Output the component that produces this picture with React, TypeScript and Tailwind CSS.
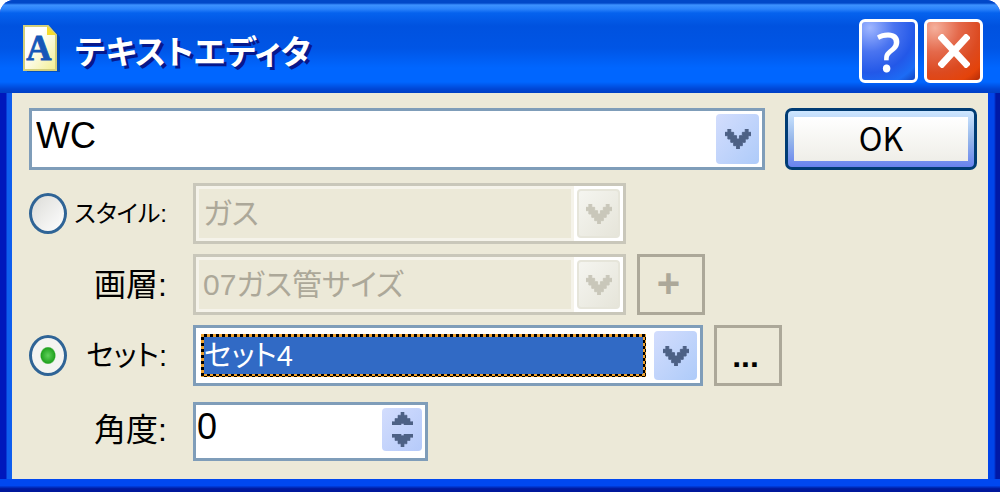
import { useState } from 'react'
import type { ReactNode } from 'react'

interface ComboProps {
  id: string
  label?: string
  options: string[]
  disabled?: boolean
  focused?: boolean
  className: string
}

function Chevron() {
  return (
    <svg viewBox="0 0 9 6" className="h-5 w-[26px]" preserveAspectRatio="none" aria-hidden="true">
      <path
        fill="currentColor"
        stroke="currentColor"
        strokeWidth="0.3"
        d="M1 0h1v1h1v1h1v1h1v-1h1v-1h1v-1h1v1h1v1h-1v1h-1v1h-1v1h-1v1h-1v-1h-1v-1h-1v-1h-1v-1h-1v-1h1z"
      />
    </svg>
  )
}

function SpinArrow({ down }: { down?: boolean }) {
  return (
    <svg viewBox="0 0 7 4" className="h-[13px] w-[21px]" preserveAspectRatio="none" aria-hidden="true">
      <path
        fill="currentColor"
        stroke="currentColor"
        strokeWidth="0.2"
        d={down ? 'M0 0h3v.5h1v-.5h3v1h-1v1h-1v1h-1v1h-1v-1h-1v-1h-1v-1h-1z' : 'M0 4h3v-.5h1v.5h3v-1h-1v-1h-1v-1h-1v-1h-1v1h-1v1h-1v1h-1z'}
      />
    </svg>
  )
}

function DocIcon() {
  return (
    <svg viewBox="0 0 38 50" className="h-[50px] w-[38px] shrink-0" aria-hidden="true">
      <defs>
        <linearGradient id="page" x1="0" y1="0" x2="1" y2="1">
          <stop offset="0.35" stopColor="#ffffff" />
          <stop offset="1" stopColor="#f3ef90" />
        </linearGradient>
      </defs>
      <path d="M4 6H29L37 15V50H4z" fill="#083a8c" opacity="0.55" />
      <path d="M1 4H25L33 13V48H1z" fill="url(#page)" stroke="#d3cf7c" strokeWidth="2" />
      <path d="M24 4L33 13H24z" fill="#f5dc2c" />
      <text
        x="16"
        y="38"
        textAnchor="middle"
        fontSize="35"
        fontWeight="700"
        fontFamily="Liberation Serif, serif"
        fill="#1557b8"
        stroke="#1557b8"
        strokeWidth="0.8"
      >
        A
      </text>
    </svg>
  )
}

function Combo({ id, label, options, disabled, focused, className }: ComboProps) {
  return (
    <div className={`flex h-[61px] border-[3px] bg-white ${disabled ? 'border-[#c9c7ba]' : 'border-[#7f9db9]'} ${className}`}>
      <div
        className={`flex min-w-0 flex-1 ${
          focused
            ? 'my-[6px] mr-[8px] ml-[5px] bg-[repeating-conic-gradient(#000_0_25%,#eda12f_0_50%)] bg-[length:6px_6px] p-[3px]'
            : 'mr-[3px] border-[3px] border-[#f5f3ea] bg-[#ece9d8]'
        }`}
      >
        <select
          id={id}
          aria-label={label}
          disabled={disabled}
          className={`min-w-0 flex-1 appearance-none leading-[36px] opacity-100 outline-none ${
            focused ? 'bg-[#316ac5] text-[29px] text-white' : 'bg-transparent pl-[4px] text-[30px] text-[#aca899]'
          }`}
        >
          {options.map((o) => (
            <option key={o}>{o}</option>
          ))}
        </select>
      </div>
      <span
        className={`my-[3px] mr-[3px] flex w-[43px] shrink-0 items-center justify-center rounded-[4px] ${
          disabled
            ? 'border-2 border-[#e6e5da] bg-linear-to-br from-[#f5f5f0] to-[#e6e5da] text-[#c9c7ba]'
            : 'bg-linear-to-br from-[#d3ddfd] to-[#aecbf9] text-[#4d6185]'
        }`}
      >
        <Chevron />
      </span>
    </div>
  )
}

function CaptionButton({ label, className, children }: { label: string; className: string; children: ReactNode }) {
  return (
    <button
      aria-label={label}
      className={`flex h-16 w-[59px] items-center justify-center rounded-[6px] border-[3px] border-white text-white ${className}`}
    >
      {children}
    </button>
  )
}

function ToolButton({ label, className, children }: { label: string; className: string; children: ReactNode }) {
  return (
    <button
      aria-label={label}
      className={`ml-[11px] flex h-[61px] w-[68px] shrink-0 items-center justify-center border-[3px] border-[#aca899] font-bold ${className}`}
    >
      {children}
    </button>
  )
}

const RADIO = 'h-[41px] w-[38px] appearance-none self-center rounded-[50%] border-[3px] border-[#2f6496]'
const RADIO_OFF = 'bg-linear-to-br from-[#dcdcd8] to-white'
const RADIO_ON = 'bg-[radial-gradient(ellipse_8px_9px_at_center,#5fd05b_0%,#22a321_85%,#f4f4f1_100%)]'
const LABEL = 'col-start-2 self-center pr-[26px] text-right whitespace-nowrap text-black'

export default function App() {
  const [mode, setMode] = useState('set')
  const [text, setText] = useState('WC')
  const [angle, setAngle] = useState(0)

  return (
    <main className="overflow-hidden rounded-t-[14px] bg-[#0831d9] font-['Liberation_Sans','Noto_Sans_CJK_JP',sans-serif] text-[32px] leading-[36px] [font-feature-settings:'palt']">
      <header className="flex h-[93px] items-center bg-[linear-gradient(#0148c8_0px,#0148c8_3px,#3d92ff_5px,#2b83fb_9px,#0562ee_13px,#0052df_26px,#0055e5_48px,#0066ff_68px,#0066ff_82px,#0046d5_89px,#0040c4_93px)] pr-[17px] pl-[23px]">
        <DocIcon />
        <h1 className="ml-[14px] flex-1 truncate pt-[16px] pb-[4px] text-[33px] font-bold text-white [text-shadow:3px_3px_0_#06188c]">
          テキストエディタ
        </h1>
        <div className="flex gap-[6px] pt-[9px]">
          <CaptionButton
            label="ヘルプ"
            className="bg-[radial-gradient(circle_at_15%_10%,#9fb6ff,#4a74f0_35%,#2358e8_65%,#1c6cf5_85%,#1444bf)]"
          >
            <span className="font-['Noto_Sans',sans-serif] text-[54px] leading-[52px] font-medium">?</span>
          </CaptionButton>
          <CaptionButton
            label="閉じる"
            className="bg-[radial-gradient(circle_at_15%_10%,#f5b09c,#e4694b_35%,#dc4a20_65%,#e4430a_85%,#b32c08)]"
          >
            <svg viewBox="0 0 32 34" className="h-[34px] w-8" aria-hidden="true">
              <path d="M4 4L28 30M28 4L4 30" stroke="currentColor" strokeWidth="7" strokeLinecap="square" />
            </svg>
          </CaptionButton>
        </div>
      </header>

      <div className="bg-[linear-gradient(90deg,#0018bc_0px,#0018bc_6px,#0f5eee_7px,#0f5eee_12px,#0044ea_12px,#0044ea_calc(100%-6px),#0018a6_calc(100%-4px),#0018a6_100%)] px-3">
        <form className="bg-[#ece9d8] pt-[15px] pr-[11px] pb-[18px] pl-[17px]" onSubmit={(e) => e.preventDefault()}>
          <div className="mb-[13px] flex gap-5">
            <div className="flex h-[62px] min-w-0 flex-1 border-[3px] border-[#7f9db9] bg-white">
              <input
                aria-label="テキスト"
                value={text}
                onChange={(e) => setText(e.target.value)}
                className="min-w-0 flex-1 pb-[6px] pl-[4px] text-[36px] outline-none"
              />
              <button
                type="button"
                aria-label="一覧を開く"
                className="m-[3px] flex w-[43px] shrink-0 items-center justify-center rounded-[4px] bg-linear-to-br from-[#d3ddfd] to-[#aecbf9] text-[#4d6185]"
              >
                <Chevron />
              </button>
            </div>
            <button
              type="submit"
              className="h-[62px] w-48 shrink-0 rounded-[7px] border-[3px] border-[#003c74] bg-linear-to-b from-[#cee7ff] via-[#98b8ea] to-[#6982ee] p-[6px]"
            >
              <span className="flex h-full items-center justify-center bg-linear-to-b from-white to-[#efeee8] pb-[4px] font-['Noto_Sans_CJK_JP',sans-serif]">
                OK
              </span>
            </button>
          </div>

          <div className="grid grid-cols-[38px_126px_1fr] gap-y-[10px]">
            <input
              id="style"
              type="radio"
              name="mode"
              checked={mode === 'style'}
              onChange={() => setMode('style')}
              className={`${RADIO} ${mode === 'style' ? RADIO_ON : RADIO_OFF}`}
            />
            <label htmlFor="style" className={`text-[24px] ${LABEL}`}>
              スタイル:
            </label>
            <div className="flex">
              <Combo id="style-name" label="スタイル名" options={['ガス']} disabled className="w-[433px]" />
            </div>

            <label htmlFor="layer" className={LABEL}>
              画層:
            </label>
            <div className="flex">
              <Combo id="layer" options={['07ガス管サイズ']} disabled className="w-[433px]" />
              <ToolButton label="画層を追加" className="pr-[5px] pb-[4px] text-[40px] text-[#aca899]">
                +
              </ToolButton>
            </div>

            <input
              id="set"
              type="radio"
              name="mode"
              checked={mode === 'set'}
              onChange={() => setMode('set')}
              className={`${RADIO} ${mode === 'set' ? RADIO_ON : RADIO_OFF}`}
            />
            <label htmlFor="set" className={`text-[29px] ${LABEL}`}>
              セット:
            </label>
            <div className="flex">
              <Combo id="set-name" label="セット名" options={['セット4']} focused className="w-[510px]" />
              <ToolButton label="参照" className="pr-[5px] text-black">
                ...
              </ToolButton>
            </div>

            <label htmlFor="angle" className={`mt-[6px] pb-[4px] ${LABEL}`}>
              角度:
            </label>
            <div className="mt-[6px] flex h-[59px] w-[235px] border-[3px] border-[#7f9db9] bg-white">
              <input
                id="angle"
                inputMode="numeric"
                value={angle}
                onChange={(e) => setAngle(Number(e.target.value) || 0)}
                className="min-w-0 flex-1 pb-[9px] pl-[1px] text-[36px] outline-none"
              />
              <div className="m-[3px] mb-[7px] flex w-10 shrink-0 flex-col rounded-[4px] bg-linear-to-br from-[#d3ddfd] to-[#b5cafa] text-[#4d6185]">
                <button type="button" aria-label="増やす" onClick={() => setAngle(angle + 1)} className="flex flex-1 items-end justify-center pb-[4px]">
                  <SpinArrow />
                </button>
                <button type="button" aria-label="減らす" onClick={() => setAngle(angle - 1)} className="flex flex-1 items-start justify-center pt-[5px]">
                  <SpinArrow down />
                </button>
              </div>
            </div>
          </div>
        </form>
      </div>
      <div className="h-[13px] bg-linear-to-b from-[#0048f0] from-50% to-[#00189c] to-75%" />
    </main>
  )
}
